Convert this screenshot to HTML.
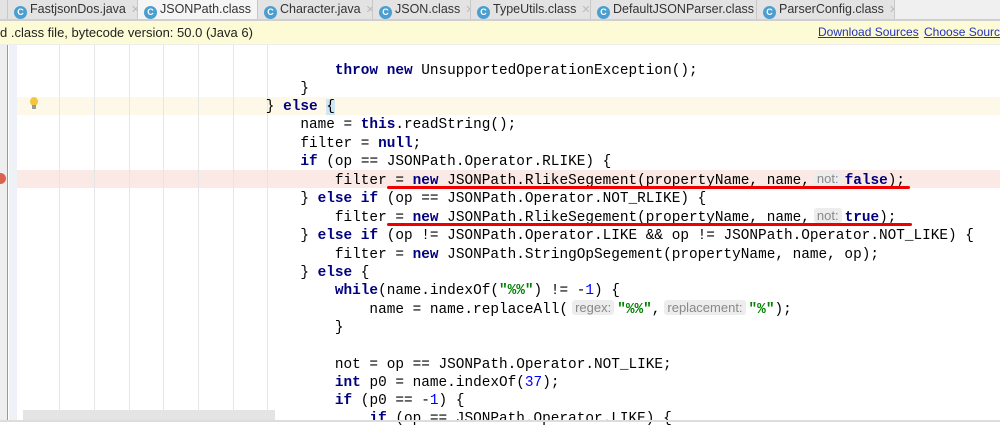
<!DOCTYPE html>
<html><head><meta charset="utf-8"><style>
*{margin:0;padding:0;box-sizing:border-box}
body{width:1000px;height:422px;overflow:hidden;background:#fff;position:relative;font-family:"Liberation Sans",sans-serif}
.tabs{position:absolute;left:0;top:0;width:1000px;height:21px;background:#f0f0f0;border-bottom:2px solid #cfcfcf}
.tab{position:absolute;top:0;height:19px;background:#e3e3e3;border-right:1px solid #c8c8c8;font-size:12.5px;color:#333;line-height:19px;white-space:nowrap;overflow:hidden}
.tab.act{background:#f5f5f5}
.ic{display:inline-block;width:13px;height:13px;border-radius:50%;background:#4a9fd0;color:#fff;font-size:9px;line-height:13px;text-align:center;vertical-align:-2px;margin:0 3px 0 6px;font-weight:bold}
.x{color:#bbb;font-size:11px;margin-left:5px}
.notice{position:absolute;left:0;top:21px;width:1000px;height:24px;background:#fdfbd5;border-bottom:1px solid #eee;font-size:13px;line-height:23px;color:#222;white-space:nowrap;overflow:hidden}
.notice a{position:absolute;top:0;color:#2233bb;text-decoration:underline;font-size:12px}
.gut1{position:absolute;left:0;top:45px;width:8px;height:377px;background:#eeeeee;border-right:1px solid #999}
.gut2{position:absolute;left:9px;top:45px;width:8px;height:377px;background:#eef1f5}
.guide{position:absolute;top:45px;width:1px;height:377px;background:#e6e6e6}
.hl{position:absolute;left:17px;width:983px;height:18px}
pre{position:absolute;left:24px;top:62px;font-family:"Liberation Mono",monospace;font-size:14.4px;line-height:18.15px;color:#000}
b{color:#000080}
.n{color:#0000ff}
.s{color:#008000;font-weight:bold}
.h{display:inline-block;line-height:15px;vertical-align:1px;background:#ededed;color:#888;font-family:"Liberation Sans",sans-serif;font-size:13px;padding:0 3px;margin:0 3px 0 4px;border-radius:3px}
.ul{position:absolute;height:3px;background:#e00;border-radius:2px}
</style></head><body>
<div class="tabs">
<div class="tab" style="left:0;width:8px"></div>
<div class="tab" style="left:8px;width:130px"><span class="ic">C</span>FastjsonDos.java<span class="x">✕</span></div>
<div class="tab act" style="left:138px;width:120px"><span class="ic">C</span>JSONPath.class<span class="x">✕</span></div>
<div class="tab" style="left:258px;width:115px"><span class="ic">C</span>Character.java<span class="x">✕</span></div>
<div class="tab" style="left:373px;width:98px"><span class="ic">C</span>JSON.class<span class="x">✕</span></div>
<div class="tab" style="left:471px;width:120px"><span class="ic">C</span>TypeUtils.class<span class="x">✕</span></div>
<div class="tab" style="left:591px;width:166px"><span class="ic">C</span>DefaultJSONParser.class<span class="x">✕</span></div>
<div class="tab" style="left:757px;width:138px"><span class="ic">C</span>ParserConfig.class<span class="x">✕</span></div>
</div>
<div class="notice"><span style="position:absolute;left:0">d .class file, bytecode version: 50.0 (Java 6)</span>
<a style="left:818px">Download Sources</a><a style="left:924px">Choose Sources</a></div>
<div class="gut1"></div><div class="gut2"></div>
<div class="hl" style="top:97px;background:#fdf8e8"></div>
<div class="hl" style="top:170px;background:#fbe9e5"></div>
<div style="position:absolute;left:-5px;top:173px;width:11px;height:11px;border-radius:50%;background:#e06050"></div>
<div style="position:absolute;left:30px;top:97px;width:8px;height:9px;border-radius:50%;background:#f3c640"></div>
<div style="position:absolute;left:32px;top:105px;width:4px;height:4px;background:#999"></div>
<div class="guide" style="left:59px"></div><div class="guide" style="left:94px"></div><div class="guide" style="left:129px"></div><div class="guide" style="left:163px"></div><div class="guide" style="left:198px"></div><div class="guide" style="left:233px"></div><div class="guide" style="left:267px"></div>
<pre>                                    <b>throw new</b> UnsupportedOperationException();
                                }
                            } <b>else</b> <span style="background:#cfe6f5">{</span>
                                name = <b>this</b>.readString();
                                filter = <b>null</b>;
                                <b>if</b> (op == JSONPath.Operator.RLIKE) {
                                    filter = <b>new</b> JSONPath.RlikeSegement(propertyName, name,<span class="h">not:</span><b>false</b>);
                                } <b>else if</b> (op == JSONPath.Operator.NOT_RLIKE) {
                                    filter = <b>new</b> JSONPath.RlikeSegement(propertyName, name,<span class="h">not:</span><b>true</b>);
                                } <b>else if</b> (op != JSONPath.Operator.LIKE &amp;&amp; op != JSONPath.Operator.NOT_LIKE) {
                                    filter = <b>new</b> JSONPath.StringOpSegement(propertyName, name, op);
                                } <b>else</b> {
                                    <b>while</b>(name.indexOf(<span class="s">"%%"</span>) != -<span class="n">1</span>) {
                                        name = name.replaceAll(<span class="h">regex:</span><span class="s">"%%"</span>,<span class="h">replacement:</span><span class="s">"%"</span>);
                                    }

                                    not = op == JSONPath.Operator.NOT_LIKE;
                                    <b>int</b> p0 = name.indexOf(<span class="n">37</span>);
                                    <b>if</b> (p0 == -<span class="n">1</span>) {
                                        <b>if</b> (op == JSONPath.Operator.LIKE) {</pre>
<div class="ul" style="left:387px;top:186px;width:523px"></div>
<div class="ul" style="left:387px;top:223px;width:525px"></div>
<div style="position:absolute;left:23px;top:410px;width:252px;height:10px;background:#e4e4e4"></div>
<div style="position:absolute;left:0;top:420px;width:1000px;height:2px;background:#ddd"></div>
</body></html>
